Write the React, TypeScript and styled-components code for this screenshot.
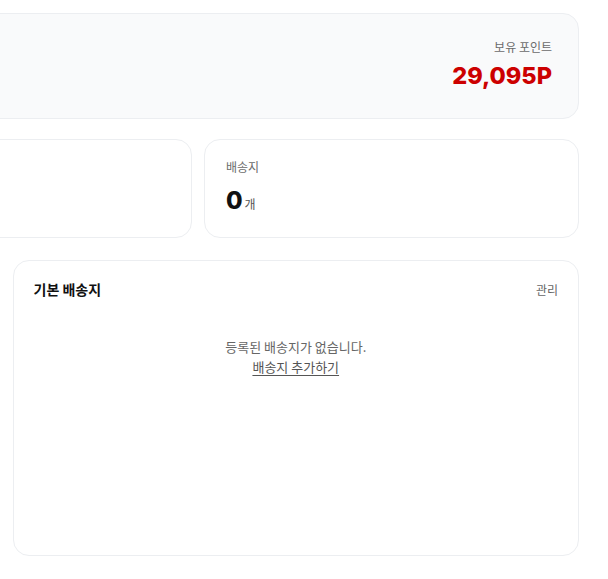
import React from "react";
import styled, { createGlobalStyle } from "styled-components";

const GlobalStyle = createGlobalStyle`
  html, body {
    margin: 0;
    padding: 0;
    background: #ffffff;
  }
  body {
    font-family: "Noto Sans CJK KR", "Noto Sans", sans-serif;
    color: #111111;
    -webkit-font-smoothing: antialiased;
  }
`;

const Viewport = styled.div`
  width: 608px;
  height: 579px;
  overflow: hidden;
  padding-top: 13px;
  box-sizing: border-box;
`;

const Canvas = styled.div`
  width: 1149px;
  margin-left: -570px;
  display: flex;
  flex-direction: column;
`;

const SummaryCard = styled.section`
  box-sizing: border-box;
  height: 106px;
  background: #f9fafb;
  border: 1px solid #eceef1;
  border-radius: 16px;
  padding: 0 26px 4px 28px;
  display: flex;
  align-items: center;
  justify-content: flex-end;
`;

const PointBox = styled.div`
  display: flex;
  flex-direction: column;
  align-items: flex-end;
  gap: 6px;
`;

const SmallLabel = styled.span`
  font-size: 12px;
  line-height: 18px;
  color: #6b6b6b;
`;

const PointValue = styled.span`
  font-family: "Inter", "Noto Sans CJK KR", sans-serif;
  font-size: 23.5px;
  line-height: 28px;
  font-weight: 800;
  color: #cc0000;
`;

const StatGrid = styled.div`
  margin-top: 20px;
  display: grid;
  grid-template-columns: repeat(3, 1fr);
  gap: 12px;
`;

const StatCard = styled.div`
  box-sizing: border-box;
  height: 99px;
  background: #ffffff;
  border: 1px solid #eceef1;
  border-radius: 16px;
  padding: 18px 21px;
  display: flex;
  flex-direction: column;
  gap: 8px;
`;

const StatValue = styled.div`
  display: flex;
  align-items: baseline;
  gap: 2px;
`;

const StatNumber = styled.span`
  font-family: "Inter", "Noto Sans CJK KR", sans-serif;
  font-size: 24px;
  line-height: 33px;
  font-weight: 800;
  color: #111;
`;

const StatUnit = styled.span`
  font-size: 12px;
  color: #555;
`;

const BottomGrid = styled.div`
  margin-top: 22px;
  display: grid;
  grid-template-columns: 1fr 1fr;
  gap: 16px;
`;

const PanelCard = styled.section`
  box-sizing: border-box;
  height: 296px;
  background: #ffffff;
  border: 1px solid #eceef1;
  border-radius: 16px;
  padding: 17px 20px;
  display: flex;
  flex-direction: column;
`;

const PanelHeader = styled.div`
  display: flex;
  align-items: center;
  justify-content: space-between;
  height: 22px;
`;

const PanelTitle = styled.h3`
  margin: 0;
  font-size: 14px;
  font-weight: 700;
  color: #111;
`;

const ManageLink = styled.a`
  font-size: 12px;
  color: #666;
  text-decoration: none;
  cursor: pointer;
`;

const EmptyState = styled.div`
  margin-top: 37px;
  display: flex;
  flex-direction: column;
  align-items: center;
`;

const EmptyText = styled.p`
  margin: 0;
  font-size: 13px;
  line-height: 20px;
  color: #666;
`;

const AddLink = styled.a`
  font-size: 13px;
  line-height: 20px;
  color: #555;
  text-decoration: underline;
  text-underline-offset: 3px;
  cursor: pointer;
`;

export default function App() {
  return (
    <>
      <GlobalStyle />
      <Viewport>
        <Canvas>
          <SummaryCard>
            <PointBox>
              <SmallLabel>보유 포인트</SmallLabel>
              <PointValue>29,095P</PointValue>
            </PointBox>
          </SummaryCard>

          <StatGrid>
            <StatCard />
            <StatCard />
            <StatCard>
              <SmallLabel>배송지</SmallLabel>
              <StatValue>
                <StatNumber>0</StatNumber>
                <StatUnit>개</StatUnit>
              </StatValue>
            </StatCard>
          </StatGrid>

          <BottomGrid>
            <PanelCard />
            <PanelCard>
              <PanelHeader>
                <PanelTitle>기본 배송지</PanelTitle>
                <ManageLink>관리</ManageLink>
              </PanelHeader>
              <EmptyState>
                <EmptyText>등록된 배송지가 없습니다.</EmptyText>
                <AddLink>배송지 추가하기</AddLink>
              </EmptyState>
            </PanelCard>
          </BottomGrid>
        </Canvas>
      </Viewport>
    </>
  );
}
